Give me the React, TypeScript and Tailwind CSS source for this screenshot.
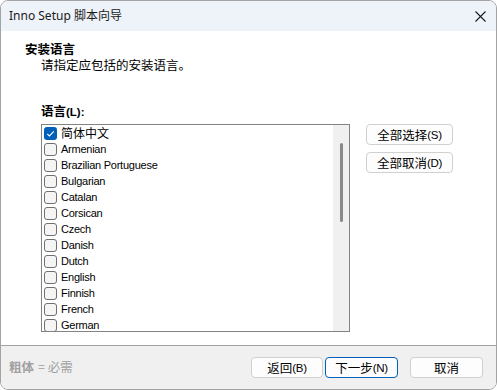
import React from "react";

const langs = [
  "Armenian",
  "Brazilian Portuguese",
  "Bulgarian",
  "Catalan",
  "Corsican",
  "Czech",
  "Danish",
  "Dutch",
  "English",
  "Finnish",
  "French",
  "German",
];

const ui = "font-['Noto_Sans','Noto_Sans_CJK_SC',sans-serif]";
const cjk = "font-['Noto_Sans_CJK_SC','Noto_Sans',sans-serif]";
const tah = "font-['Liberation_Sans','Noto_Sans_CJK_SC',sans-serif]";

function Box({ checked }: { checked?: boolean }) {
  if (checked)
    return (
      <span className="w-[13px] h-[13px] rounded-[3px] bg-[#005fb8] flex items-center justify-center shrink-0">
        <svg width="13" height="13" viewBox="0 0 13 13">
          <path d="M3.2 6.8 L5.4 9 L9.8 4.4" fill="none" stroke="#ffffff" strokeWidth="1.1" />
        </svg>
      </span>
    );
  return <span className="w-[13px] h-[13px] rounded-[3px] border border-[#6f6f6f] bg-[#f5f5f5] shrink-0" />;
}

function Btn({ label, hot, primary, w }: { label: string; hot?: string; primary?: boolean; w: string }) {
  return (
    <div
      className={`${w} h-[21px] rounded-[4px] border ${
        primary ? "border-[#005fb8]" : "border-[#d0d0d0]"
      } bg-[#fdfdfd] flex items-center justify-center text-[12.5px] leading-[16px] text-black ${cjk}`}
    >
      <span>{label}</span>
      {hot && <span className={`${tah} text-[11.5px] tracking-[-0.3px]`}>{hot}</span>}
    </div>
  );
}

export default function App() {
  return (
    <div className="w-[497px] h-[390px] bg-white">
      <div className="w-[497px] h-[390px] rounded-[8px] border border-[#a3a3a3] overflow-hidden flex flex-col bg-white">
        <div className="h-[30px] shrink-0 bg-[#eef2f9] flex items-center justify-between pl-[8px] pr-[10px]">
          <span className={`${ui} text-[12px] leading-[16px] text-[#1a1a1a]`}>Inno Setup 脚本向导</span>
          <svg width="11" height="11" viewBox="0 0 11 11">
            <path d="M0.5 0.5 L10.5 10.5 M10.5 0.5 L0.5 10.5" stroke="#1a1a1a" strokeWidth="1.1" />
          </svg>
        </div>
        <div className="flex-1 bg-white flex flex-col">
          <div className={`pt-[10px] pl-[24px] ${cjk} text-black`}>
            <div className="h-[16px] leading-[16px] text-[12.5px] font-bold">安装语言</div>
            <div className="h-[16px] leading-[16px] text-[12.5px] pl-[16px]">请指定应包括的安装语言。</div>
          </div>
          <div className="mt-[30px] pl-[40px] flex">
            <div className="flex flex-col">
              <div className={`h-[16px] leading-[16px] text-[12.5px] font-bold ${cjk} text-black`}>
                语言<span className={`${tah} text-[11.5px]`}>(L):</span>
              </div>
              <div className="mt-[5px] w-[309px] h-[208px] border border-[#838383] flex overflow-hidden">
                <div className="flex-1 flex flex-col">
                  <div className="h-[16px] flex items-center pl-[2px] gap-[4px] shrink-0">
                    <Box checked />
                    <span className={`${cjk} text-[12px] leading-[16px] text-black`}>简体中文</span>
                  </div>
                  {langs.map((l) => (
                    <div key={l} className="h-[16px] flex items-center pl-[2px] gap-[4px] shrink-0">
                      <Box />
                      <span className={`${tah} text-[11px] tracking-[-0.25px] leading-[16px] text-black`}>{l}</span>
                    </div>
                  ))}
                </div>
                <div className="w-[16px] shrink-0 bg-[#f0f0f0] flex justify-center pt-[18px]">
                  <div className="w-[3px] h-[79px] rounded-full bg-[#8a8a8a]" />
                </div>
              </div>
            </div>
            <div className="ml-[16px] mt-[21px] flex flex-col gap-[7px]">
              <Btn label="全部选择" hot="(S)" w="w-[87px]" />
              <Btn label="全部取消" hot="(D)" w="w-[87px]" />
            </div>
          </div>
        </div>
        <div className="h-[44px] shrink-0 border-t border-[#a3a3a3] bg-[#f0f0f0] flex items-start pt-[11px] pl-[8px] pr-[13px]">
          <div className={`h-[21px] flex items-center text-[12.5px] text-[#a0a0a0] ${cjk}`}>
            <span className="font-bold">粗体</span>
            <span className="ml-[4px]">= 必需</span>
          </div>
          <div className="ml-auto flex">
            <Btn label="返回" hot="(B)" w="w-[72px]" />
            <div className="ml-[2px]">
              <Btn label="下一步" hot="(N)" primary w="w-[73px]" />
            </div>
            <div className="ml-[12px]">
              <Btn label="取消" w="w-[73px]" />
            </div>
          </div>
        </div>
      </div>
    </div>
  );
}
